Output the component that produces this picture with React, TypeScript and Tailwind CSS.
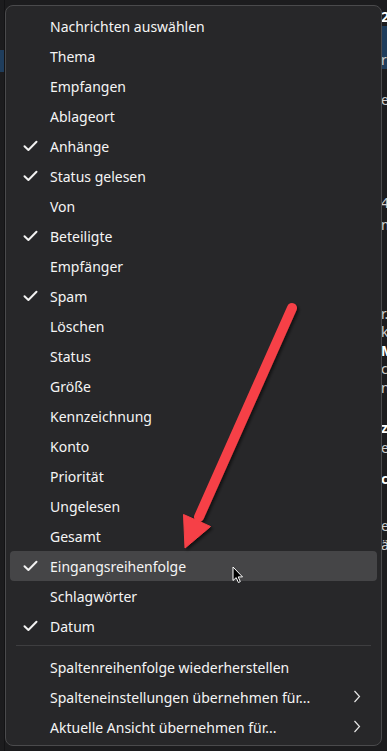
import React from 'react';

type Item = { label: string; checked?: boolean; active?: boolean };

const columns: Item[] = [
  { label: 'Nachrichten auswählen' },
  { label: 'Thema' },
  { label: 'Empfangen' },
  { label: 'Ablageort' },
  { label: 'Anhänge', checked: true },
  { label: 'Status gelesen', checked: true },
  { label: 'Von' },
  { label: 'Beteiligte', checked: true },
  { label: 'Empfänger' },
  { label: 'Spam', checked: true },
  { label: 'Löschen' },
  { label: 'Status' },
  { label: 'Größe' },
  { label: 'Kennzeichnung' },
  { label: 'Konto' },
  { label: 'Priorität' },
  { label: 'Ungelesen' },
  { label: 'Gesamt' },
  { label: 'Eingangsreihenfolge', checked: true, active: true },
  { label: 'Schlagwörter' },
  { label: 'Datum', checked: true },
];

const actions = [
  { label: 'Spaltenreihenfolge wiederherstellen', sub: false },
  { label: 'Spalteneinstellungen übernehmen für...', sub: true },
  { label: 'Aktuelle Ansicht übernehmen für...', sub: true },
];

// bits of the message list that peek out on the right (gap = space above)
const peek = [
  { gap: 8, t: '2', bold: true },
  { gap: 29, t: 'r', sel: true },
  { gap: 26, t: 'e' },
  { gap: 89, t: '4' },
  { gap: 8, t: 'm' },
  { gap: 75, t: 'r.' },
  { gap: 3, t: 'ke' },
  { gap: 5, t: 'M', bold: true },
  { gap: 3, t: 'cr' },
  { gap: 5, t: 'n' },
  { gap: 26, t: 'z', bold: true },
  { gap: 6, t: 'e' },
  { gap: 17, t: 'c', bold: true },
  { gap: 33, t: 'er' },
  { gap: 5, t: 'ä' },
];

const Check = () => (
  <svg width="15" height="12" viewBox="0 0 15 12" className="absolute left-[13px] top-[9px]">
    <path d="M1.5 6.2 L5.4 10 L13.5 1.8" fill="none" stroke="#f2f2f2" strokeWidth="2" strokeLinecap="round" strokeLinejoin="round" />
  </svg>
);

const Chevron = () => (
  <svg width="8" height="13" viewBox="0 0 8 13" className="absolute right-[16px] top-[8px]">
    <path d="M1.5 1 L6.5 6.5 L1.5 12" fill="none" stroke="#e6e6e6" strokeWidth="1.2" />
  </svg>
);

export default function App() {
  return (
    <div className="relative w-[387px] h-[751px] overflow-hidden bg-[#1c1c1e]" style={{ fontFamily: '"Noto Sans", "Open Sans", sans-serif' }}>
      {/* app behind the menu */}
      <div className="flex h-[751px]">
        <div className="w-[5px] shrink-0 border-r border-[#131315] flex flex-col">
          <div className="mt-[50px] h-[22px] bg-[#1f3d5c]" />
        </div>
        <div className="flex-1 flex flex-col pt-[50px]">
          <div className="h-[22px] bg-[#1f3d5c]" />
        </div>
        <div className="w-[6px] shrink-0 flex flex-col overflow-hidden">
          {peek.map((p, i) => (
            <div
              key={i}
              className={`flex flex-col ${i === 0 ? 'pt-[8px]' : ''}`}
            >
              {i > 0 && <div style={{ height: p.gap - 4 }} className={p.sel ? 'bg-[#1f3d5c]' : ''} />}
              <span
                className={`h-[18px] text-[14px] leading-[18px] whitespace-nowrap ${p.sel ? 'bg-[#1f3d5c]' : ''} ${p.bold ? 'font-bold text-white' : 'text-[#d0d0d0]'}`}
              >
                {p.t}
              </span>
            </div>
          ))}
        </div>
      </div>

      {/* context menu */}
      <div className="absolute left-[5px] top-[5px] w-[377px] h-[741px] rounded-[8px] border border-[#4a4a4c] bg-[#272729] px-[4px] pt-[5px] text-[14px] text-[#f5f5f5]">
        {columns.map(item => (
          <div
            key={item.label}
            className={`relative h-[30px] flex items-center pl-[40px] rounded-[4px] ${item.active ? 'bg-[#454547]' : ''}`}
          >
            {item.checked && <Check />}
            <span>{item.label}</span>
          </div>
        ))}
        <div className="mx-[6px] mt-[4px] mb-[6px] h-px bg-[#3e3e40]" />
        {actions.map(a => (
          <div key={a.label} className="relative h-[30px] flex items-center pl-[40px]">
            <span>{a.label}</span>
            {a.sub && <Chevron />}
          </div>
        ))}
      </div>

      {/* annotation arrow */}
      <svg className="absolute left-0 top-0" width="387" height="751" viewBox="0 0 387 751">
        <defs>
          <filter id="sh" x="-20%" y="-20%" width="140%" height="140%">
            <feDropShadow dx="2" dy="2" stdDeviation="1.8" floodColor="#000" floodOpacity="0.55" />
          </filter>
        </defs>
        <g filter="url(#sh)" fill="#f64046" stroke="#f64046">
          <line x1="292" y1="308" x2="199" y2="517" strokeWidth="10" strokeLinecap="round" />
          <polygon points="185,548 183.5,514.5 210.5,526.5" strokeWidth="1" strokeLinejoin="round" />
        </g>
      </svg>

      {/* mouse pointer */}
      <svg className="absolute left-[232px] top-[566px]" width="12" height="18" viewBox="0 0 12 18">
        <path d="M1 1 L1 14.5 L4.2 11.6 L6.4 16.5 L8.3 15.6 L6.2 10.9 L10.5 10.9 Z" fill="#000" stroke="#fff" strokeWidth="1" strokeLinejoin="round" />
      </svg>
    </div>
  );
}
